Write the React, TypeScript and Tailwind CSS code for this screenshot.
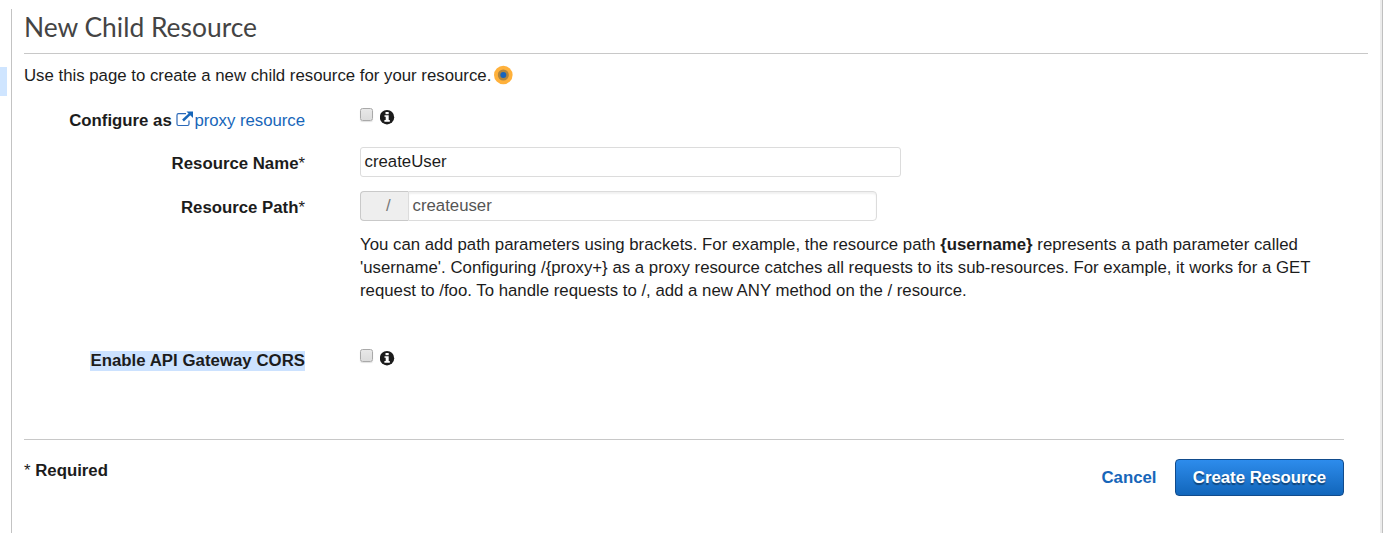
import React from "react";

function InfoIcon() {
  return (
    <svg className="block h-[15px] w-[15px] shrink-0" viewBox="0 0 15 15">
      <circle cx="7" cy="7.2" r="7.2" fill="#1c1c1c" />
      <rect x="5.5" y="2" width="3.2" height="2.2" fill="#fff" />
      <path d="M4.5 5.2h4.2v4.9h1.1v1.7H4.4v-1.7h1.3V6.7H4.5z" fill="#fff" />
    </svg>
  );
}

function ExternalIcon() {
  return (
    <svg className="mr-px inline-block h-[17px] w-[17px] align-[-2px]" viewBox="0 0 17 17" fill="none">
      <path d="M10 2.7H2.5Q1 2.7 1 4.2V13Q1 14.5 2.5 14.5H11.5Q13 14.5 13 13V9.500" stroke="#2a68b8" strokeWidth="1.2" />
      <path d="M7 9.500L14 2.800" stroke="#1766b9" strokeWidth="2.5" />
      <path d="M10.500 0.500H17V7z" fill="#1766b9" />
    </svg>
  );
}

function CheckWithInfo() {
  return (
    <div className="flex">
      <div className="h-[13px] w-[13px] rounded-[2.5px] border border-[#a9a9a9] bg-linear-to-b from-[#e8e8e8] to-[#dcdcdc] shadow-[0_1px_1px_rgba(0,0,0,0.12)]" />
      <div className="mt-[2px] ml-[7px]">
        <InfoIcon />
      </div>
    </div>
  );
}

function Label({ children }: { children: React.ReactNode }) {
  return <div className="w-[281px] shrink-0 text-right font-bold whitespace-nowrap">{children}</div>;
}

export default function App() {
  return (
    <div className="flex h-[533px] w-[1383px] overflow-hidden bg-white font-['Liberation_Sans',Arial,sans-serif] text-[16.8px] leading-[23px] text-[#1c1c1c]">
      <div className="mt-[67px] h-[29px] w-[7px] bg-[#cfe5ff]" />
      <main className="mt-[9px] ml-[4px] w-[1369px] border-l border-[#c3c3c3] pl-[12px]">
        <h1 className="h-[45px] w-[1344px] border-b border-[#c8c8c8] pt-px font-[Lato,sans-serif] text-[26.4px] leading-[34px] text-[#444]">
          New Child Resource
        </h1>
        <div className="mt-[10px] flex h-[23px]">
          <p className="w-[470px] whitespace-nowrap">Use this page to create a new child resource for your resource.</p>
          <svg className="mt-[1px] h-[20px] w-[20px]" viewBox="0 0 20 20">
            <circle cx="9.3" cy="10" r="9.3" fill="#ffb13b" />
            <circle cx="9.3" cy="10" r="5.5" fill="#b1863f" />
            <circle cx="9.3" cy="10" r="3" fill="#1664bd" />
          </svg>
        </div>

        <div className="mt-[22px] flex h-[43px]">
          <Label>
            Configure as <a className="font-normal tracking-[-0.03px] text-[#1766b9]"><ExternalIcon />proxy resource</a>
          </Label>
          <div className="-mt-px ml-[55px]"><CheckWithInfo /></div>
        </div>
        <div className="flex h-[44px]">
          <Label>Resource Name<span className="font-normal">*</span></Label>
          <div className="-mt-[5px] ml-[55px] h-[30px] w-[541px] rounded-[3px] border border-[#dcdcdc] px-[3.5px] pt-[2px]">createUser</div>
        </div>
        <div className="flex h-[37px]">
          <Label>Resource Path<span className="font-normal">*</span></Label>
          <div className="-mt-[5px] ml-[55px] flex h-[30px] w-[517px]">
            <div className="w-[48px] rounded-l-[4px] border border-r-0 border-[#c9c9c9] bg-[#eee] pt-[2px] pl-[25px] text-[#777]">/</div>
            <div className="flex-1 rounded-r-[4px] border border-[#dcdcdc] pt-[2px] pl-[3.5px] text-[#555] shadow-[inset_0_2px_2px_rgba(0,0,0,0.06)]">createuser</div>
          </div>
        </div>
        <div className="ml-[336px] h-[69px] whitespace-nowrap">
          <p className="tracking-[0.008px]">You can add path parameters using brackets. For example, the resource path <b>{"{username}"}</b> represents a path parameter called</p>
          <p className="tracking-[0.005px]">'username'. Configuring /{"{proxy+}"} as a proxy resource catches all requests to its sub-resources. For example, it works for a GET</p>
          <p>request to /foo. To handle requests to /, add a new ANY method on the / resource.</p>
        </div>
        <div className="mt-[47px] flex h-[90px]">
          <Label><span className="bg-[#cce2ff] pb-px tracking-[0.03px]">Enable API Gateway CORS</span></Label>
          <div className="ml-[55px]"><CheckWithInfo /></div>
        </div>
        <div className="flex w-[1320px] border-t border-[#c8c8c8]">
          <p className="mt-[19px] flex-1">* <b>Required</b></p>
          <a className="mt-[26px] font-bold text-[#1766b9]">Cancel</a>
          <button className="ml-[18.5px] mt-[19px] h-[37px] w-[169px] rounded-[4px] border border-[#114b8c] bg-linear-to-b from-[#2d8cec] to-[#1166bb] font-bold text-white [text-shadow:0_2px_1px_rgba(0,0,0,0.4)]">
            Create Resource
          </button>
        </div>
      </main>
      <div className="w-[2px] bg-[#ececec]" />
      <div className="w-px bg-[#c0c0c0]" />
    </div>
  );
}
